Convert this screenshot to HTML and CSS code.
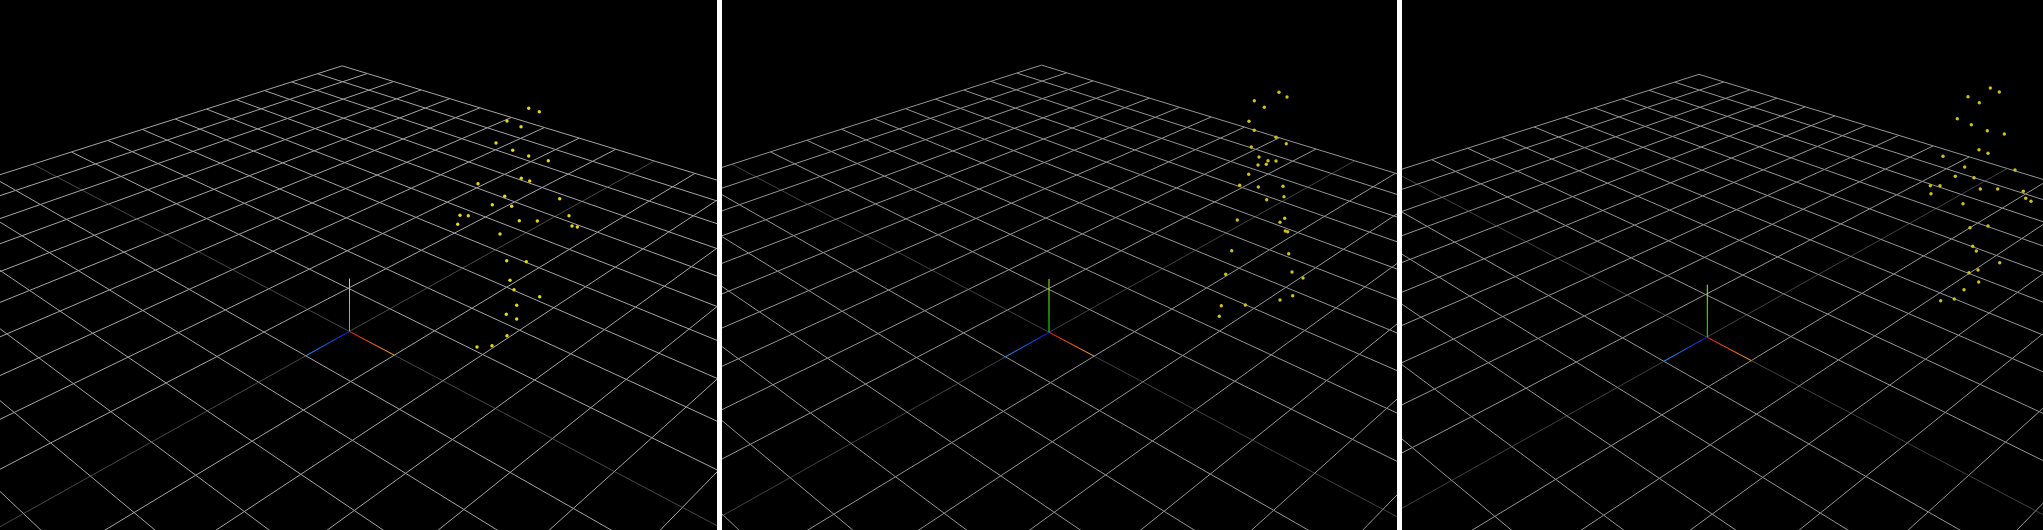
FILE: index.html
```html
<!DOCTYPE html>
<html lang="en">
<head>
<meta charset="utf-8">
<meta name="viewport" content="width=device-width, initial-scale=1">
<title>Point cloud views</title>
<link rel="stylesheet" href="styles.css">
</head>
<body>
<main class="views">
  <svg class="view view-a" viewBox="0 0 717 530" role="img" aria-label="Point cloud, first view"></svg>
  <svg class="view view-b" viewBox="0 0 675 530" role="img" aria-label="Point cloud, second view"></svg>
  <svg class="view view-c" viewBox="0 0 641 530" role="img" aria-label="Point cloud, third view"></svg>
</main>
<script src="scene.js"></script>
</body>
</html>
```
FILE: styles.css
```css
body {
  margin: 0;
  background: #fff;
}

.views {
  display: flex;
  align-items: flex-start;
  gap: 5px;
}

.view {
  display: block;
  min-width: 0;
  height: auto;
  background: #000;
}

.view-a { flex: 717 1 0; }
.view-b { flex: 675 1 0; }
.view-c { flex: 641 1 0; }

.grid-line,
.grid-center,
.axis {
  fill: none;
  stroke-width: 1;
}

.grid-line { stroke: #a4a4a4; }
.grid-center { stroke: #484848; }

.point { fill: #e8d80c; }
.view-b .point,
.view-c .point { fill: #d2c210; }

.view-b .grid-line,
.view-c .grid-line { stroke: #949494; }
.view-b .grid-center,
.view-c .grid-center { stroke: #404040; }
```
FILE: scene.js
```js
const SVG_NS = "http://www.w3.org/2000/svg";
const HALF = 10;

// pins: [grid x, grid z, screen x, screen y]; up: screen end of the y axis
const scenes = [
  {
    target: ".view-a",
    pins: [[-10, 0, 33, 164.2], [0, -10, 654.3, 161], [6, 0, 682.4, 507.4], [0, 6, 23.5, 513.6]],
    up: [349.5, 278.5],
    points: [
      [528.7, 108.3], [539.3, 111.7], [507, 121], [521, 126.7], [496, 143], [512.7, 150.3], [528.7, 156],
      [548.3, 160.7], [521.3, 178.3], [529.7, 181], [478, 183.7], [504.7, 196.3], [559.7, 198.7],
      [492.3, 204.7], [511.7, 206.3], [460, 215.3], [468.3, 215.7], [519.3, 220.7], [537.3, 221],
      [569, 215.7], [572, 226], [577.3, 227], [457.7, 224.3], [500, 234], [506.7, 260.7], [526.3, 261.7],
      [510, 280.3], [514, 289.7], [539.7, 296.7], [516.7, 305.3], [506.3, 314.3], [516.7, 319],
      [507, 335.7], [492, 345.7], [477, 347]
    ]
  },
  {
    target: ".view-b",
    pins: [[-10, 0, 10, 164.2], [0, -10, 632.7, 160.8], [6, 0, 661, 509.3], [0, 6, 1.3, 515.2]],
    up: [327, 279],
    points: [
      [557, 92.3], [565, 97], [532.3, 100.7], [542.3, 107.3], [527, 121.3], [532.3, 130.3], [554, 137.3],
      [564.3, 143.7], [529.3, 147], [537, 157], [546, 160.7], [554, 161], [536, 165], [544.3, 164.3],
      [526.7, 174.3], [517.7, 185.3], [536.3, 187], [561, 186.3], [562, 196.7], [544.7, 199.7],
      [515.3, 220], [562.7, 218.3], [558, 222.3], [563.3, 231], [565.7, 231.7], [509.7, 250.7],
      [566.7, 253.7], [503.7, 274.3], [570, 272], [581, 278], [499.3, 305.7], [523.3, 305], [558, 300],
      [570.7, 295.7], [497.3, 316.3]
    ]
  },
  {
    target: ".view-c",
    pins: [[-9, 0, 15.3, 184.2], [0, -10, 605.3, 168.5], [6, 0, 633.7, 510.8], [0, 5, 49.7, 480.4]],
    up: [305.3, 284.7],
    points: [
      [588.3, 88], [597.3, 92], [566, 96.7], [577.3, 102.7], [555.3, 118.7], [569.3, 124.7],
      [585.3, 130.7], [602.3, 134], [577, 149.7], [586, 153.3], [541, 156.3], [562.7, 167], [613, 170],
      [553.3, 176.3], [572, 177.7], [528.3, 185.7], [538, 185.7], [529, 193.7], [578.3, 189],
      [595.7, 189], [621.3, 191.3], [623.7, 198.3], [629, 201.3], [561, 203.7], [568, 227.7], [586, 226],
      [570.7, 246.3], [574.3, 251], [597.7, 262.7], [567, 272.7], [576, 270], [576.7, 282],
      [562, 289.7], [552.3, 299], [538.7, 300.7]
    ]
  }
];

// Gauss-Jordan elimination on an augmented matrix
function solve(m) {
  const n = m.length;
  for (let c = 0; c < n; c++) {
    let p = c;
    for (let r = c + 1; r < n; r++) if (Math.abs(m[r][c]) > Math.abs(m[p][c])) p = r;
    [m[c], m[p]] = [m[p], m[c]];
    for (let r = 0; r < n; r++) {
      if (r === c) continue;
      const k = m[r][c] / m[c][c];
      for (let j = c; j <= n; j++) m[r][j] -= k * m[c][j];
    }
  }
  return m.map((row, i) => row[n] / row[i]);
}

// Perspective mapping of the ground plane from four pinned points
function projector(pins) {
  const rows = [];
  for (const [x, z, u, v] of pins) {
    rows.push([x, z, 1, 0, 0, 0, -u * x, -u * z, u]);
    rows.push([0, 0, 0, x, z, 1, -v * x, -v * z, v]);
  }
  const h = solve(rows);
  return (x, z) => {
    const w = h[6] * x + h[7] * z + 1;
    return w < 0.1 ? null : [(h[0] * x + h[1] * z + h[2]) / w, (h[3] * x + h[4] * z + h[5]) / w];
  };
}

function add(parent, name, attrs) {
  const el = document.createElementNS(SVG_NS, name);
  for (const key in attrs) el.setAttribute(key, attrs[key]);
  parent.appendChild(el);
  return el;
}

function addAxis(svg, id, from, to, startColor, endColor) {
  const gradient = add(svg, "linearGradient", {
    id, gradientUnits: "userSpaceOnUse", x1: from[0], y1: from[1], x2: to[0], y2: to[1]
  });
  add(gradient, "stop", { offset: 0, "stop-color": startColor });
  add(gradient, "stop", { offset: 1, "stop-color": endColor });
  add(svg, "line", {
    class: "axis", x1: from[0], y1: from[1], x2: to[0], y2: to[1], stroke: `url(#${id})`
  });
}

function addGridLine(svg, at, k) {
  const pts = [];
  for (let t = -HALF; t <= HALF; t++) {
    const p = at(t);
    if (!p) break;
    pts.push(p.map(n => n.toFixed(2)).join(","));
  }
  add(svg, "polyline", { class: k === 0 ? "grid-center" : "grid-line", points: pts.join(" ") });
}

scenes.forEach((scene, index) => {
  const svg = document.querySelector(scene.target);
  const project = projector(scene.pins);
  const order = [0];
  for (let k = 1; k <= HALF; k++) order.push(-k, k);
  for (const k of order) {
    addGridLine(svg, t => project(t, k), k);
    addGridLine(svg, t => project(k, t), k);
  }
  const origin = project(0, 0);
  addAxis(svg, `axis-x-${index}`, origin, project(1, 0), "#f00", "#f90");
  addAxis(svg, `axis-z-${index}`, origin, project(0, 1), "#00f", "#09f");
  addAxis(svg, `axis-y-${index}`, [scene.up[0], origin[1]], scene.up, "#0f0", "#9f0");
  for (const [cx, cy] of scene.points) add(svg, "circle", { class: "point", cx, cy, r: 1.7 });
});
```
